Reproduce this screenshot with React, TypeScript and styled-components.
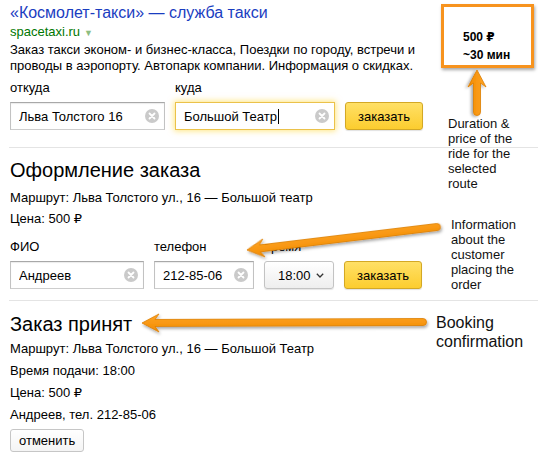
import React from "react";
import styled, { createGlobalStyle } from "styled-components";

const GlobalStyle = createGlobalStyle`
  html, body {
    margin: 0;
    padding: 0;
    background: #fff;
  }
  body {
    font-family: "Liberation Sans", Arial, "DejaVu Sans", sans-serif;
    font-size: 13px;
    color: #000;
  }
`;

const Page = styled.div`
  position: relative;
  width: 538px;
  height: 458px;
  overflow: hidden;
  background: #fff;
`;

const Section = styled.section<{ $top: number }>`
  padding: ${(p) => p.$top}px 0 0 10px;
`;

const Title = styled.a`
  display: block;
  font-size: 16px;
  line-height: 18px;
  color: #1a3dc1;
  text-decoration: none;
`;

const Url = styled.div`
  margin-top: 2px;
  font-size: 13px;
  line-height: 16px;
  color: #070;

  span {
    margin-left: 4px;
    font-size: 9px;
    color: #8dbd80;
  }
`;

const Desc = styled.p`
  margin: 1px 0 0;
  font-size: 13px;
  line-height: 16px;
`;

const Heading = styled.h2`
  margin: 0;
  font-size: 20px;
  line-height: 24px;
  font-weight: normal;
`;

const Line = styled.div<{ $gap: number }>`
  margin-top: ${(p) => p.$gap}px;
  line-height: 16px;
`;

const Divider = styled.hr<{ $gap: number }>`
  margin: ${(p) => p.$gap}px 0 0 9px;
  border: 0;
  border-top: 1px solid #e4e4e4;
  height: 0;
`;

const FieldRow = styled.div<{ $gap: number }>`
  display: flex;
  align-items: flex-end;
  gap: 10px;
  margin-top: ${(p) => p.$gap}px;
`;

const Field = styled.div`
  display: flex;
  flex-direction: column;
`;

const Label = styled.span`
  line-height: 16px;
  margin-bottom: 6px;
`;

const InputBox = styled.div<{ $width: number; $focused?: boolean }>`
  box-sizing: border-box;
  display: flex;
  align-items: center;
  width: ${(p) => p.$width}px;
  height: 28px;
  padding: 0 5px 0 8px;
  background: #fff;
  border: 1px solid;
  border-color: ${(p) =>
    p.$focused ? "#ebc24a" : "#a8a8a8 #c2c2c2 #cdcdcd"};
  box-shadow: ${(p) =>
    p.$focused
      ? "0 0 6px 1px rgba(255, 204, 0, 0.5)"
      : "inset 0 1px 1px rgba(0, 0, 0, 0.08)"};
  font-size: 13px;
`;

const Value = styled.span`
  flex: 1;
  white-space: nowrap;
  overflow: hidden;
`;

const Caret = styled.span`
  display: inline-block;
  width: 1px;
  height: 15px;
  margin-left: 1px;
  background: #000;
  vertical-align: -3px;
`;

const YellowButton = styled.button`
  box-sizing: border-box;
  width: 78px;
  height: 28px;
  padding: 0;
  border: 1px solid #d3a825;
  border-radius: 3px;
  background: linear-gradient(#ffe066, #fccd2f);
  box-shadow: 0 1px 1px rgba(0, 0, 0, 0.12);
  font-family: inherit;
  font-size: 13px;
  color: #000;
`;

const PlainButton = styled.button`
  box-sizing: border-box;
  margin-top: 6px;
  height: 23px;
  padding: 0 8px;
  border: 1px solid #c6c6c6;
  border-radius: 3px;
  background: linear-gradient(#fff, #f4f4f4);
  font-family: inherit;
  font-size: 13px;
  color: #000;
`;

const Select = styled.div`
  box-sizing: border-box;
  display: flex;
  align-items: center;
  gap: 5px;
  width: 70px;
  height: 28px;
  padding: 0 0 0 13px;
  border: 1px solid #c3c3c3;
  border-radius: 3px;
  background: linear-gradient(#fff, #eeeeee);
  box-shadow: 0 1px 1px rgba(0, 0, 0, 0.1);
  font-size: 13px;
`;

const PriceBox = styled.div`
  position: absolute;
  left: 441px;
  top: 4px;
  box-sizing: border-box;
  width: 93px;
  height: 64px;
  padding: 21px 0 0 19px;
  border: 3px solid #f7931e;
  box-shadow: 1px 2px 3px rgba(0, 0, 0, 0.35);
  background: #fff;
  font-size: 12px;
  font-weight: bold;
  line-height: 18px;
`;

const Note = styled.div<{ $left: number; $top: number; $size: number; $lh: number }>`
  position: absolute;
  left: ${(p) => p.$left}px;
  top: ${(p) => p.$top}px;
  font-size: ${(p) => p.$size}px;
  line-height: ${(p) => p.$lh}px;
  color: #111;
`;

const Overlay = styled.svg`
  position: absolute;
  left: 0;
  top: 0;
  pointer-events: none;
`;

const ClearIcon = () => (
  <svg width="14" height="14" viewBox="0 0 14 14">
    <circle cx="7" cy="7" r="7" fill="#cacaca" />
    <path d="M4.5 4.5l5 5M9.5 4.5l-5 5" stroke="#fff" strokeWidth="1.8" strokeLinecap="round" />
  </svg>
);

const Chevron = () => (
  <svg width="8" height="5" viewBox="0 0 8 5">
    <path d="M0.8 0.8L4 4L7.2 0.8" fill="none" stroke="#333" strokeWidth="1.3" />
  </svg>
);

type ArrowProps = { x1: number; y1: number; x2: number; y2: number };

// tail (x1, y1) -> tip (x2, y2)
const Arrow = ({ x1, y1, x2, y2 }: ArrowProps) => {
  const len = Math.hypot(x1 - x2, y1 - y2);
  const angle = (Math.atan2(y1 - y2, x1 - x2) * 180) / Math.PI;
  const d = `M0 0 L17 -9 L13 -3.5 L${len} -3.5 A3.5 3.5 0 0 1 ${len} 3.5 L13 3.5 L17 9 Z`;
  return (
    <g transform={`translate(${x2} ${y2}) rotate(${angle})`} filter="url(#shadow)">
      <path d={d} fill="url(#orange)" stroke="#dc7d05" strokeWidth="0.8" strokeLinejoin="round" />
    </g>
  );
};

const App: React.FC = () => {
  return (
    <Page>
      <GlobalStyle />

      <Section $top={4}>
        <Title href="#">«Космолет-такси» — служба такси</Title>
        <Url>
          spacetaxi.ru<span>▼</span>
        </Url>
        <Desc>
          Заказ такси эконом- и бизнес-класса, Поездки по городу, встречи и
          <br />
          проводы в аэропорту. Автопарк компании. Информация о скидках.
        </Desc>
        <FieldRow $gap={6}>
          <Field>
            <Label>откуда</Label>
            <InputBox $width={155}>
              <Value>Льва Толстого 16</Value>
              <ClearIcon />
            </InputBox>
          </Field>
          <Field>
            <Label>куда</Label>
            <InputBox $width={160} $focused>
              <Value>
                Большой Театр<Caret />
              </Value>
              <ClearIcon />
            </InputBox>
          </Field>
          <YellowButton>заказать</YellowButton>
        </FieldRow>
      </Section>

      <Divider $gap={17} />

      <Section $top={10}>
        <Heading>Оформление заказа</Heading>
        <Line $gap={8}>Маршрут: Льва Толстого ул., 16 — Большой театр</Line>
        <Line $gap={5}>Цена: 500 ₽</Line>
        <FieldRow $gap={12}>
          <Field>
            <Label>ФИО</Label>
            <InputBox $width={134}>
              <Value>Андреев</Value>
              <ClearIcon />
            </InputBox>
          </Field>
          <Field>
            <Label>телефон</Label>
            <InputBox $width={100}>
              <Value>212-85-06</Value>
              <ClearIcon />
            </InputBox>
          </Field>
          <Field>
            <Label>время</Label>
            <Select>
              18:00
              <Chevron />
            </Select>
          </Field>
          <YellowButton>заказать</YellowButton>
        </FieldRow>
      </Section>

      <Divider $gap={11} />

      <Section $top={11}>
        <Heading>Заказ принят</Heading>
        <Line $gap={5}>Маршрут: Льва Толстого ул., 16 — Большой Театр</Line>
        <Line $gap={6}>Время подачи: 18:00</Line>
        <Line $gap={6}>Цена: 500 ₽</Line>
        <Line $gap={6}>Андреев, тел. 212-85-06</Line>
        <PlainButton>отменить</PlainButton>
      </Section>

      <PriceBox>
        500 ₽
        <br />
        ~30 мин
      </PriceBox>

      <Overlay width="538" height="458" viewBox="0 0 538 458">
        <defs>
          <linearGradient id="orange" x1="0" y1="0" x2="0" y2="1">
            <stop offset="0" stopColor="#ffa526" />
            <stop offset="1" stopColor="#f28b00" />
          </linearGradient>
          <filter id="shadow" x="-20%" y="-50%" width="140%" height="200%">
            <feDropShadow dx="1" dy="2" stdDeviation="1.4" floodColor="#000" floodOpacity="0.35" />
          </filter>
        </defs>
        <Arrow x1={477} y1={112} x2={477} y2={70} />
        <Arrow x1={437} y1={227} x2={247} y2={250} />
        <Arrow x1={423} y1={322} x2={142} y2={323} />
      </Overlay>

      <Note $left={448} $top={116} $size={13} $lh={15}>
        Duration &amp;
        <br />
        price of the
        <br />
        ride for the
        <br />
        selected
        <br />
        route
      </Note>
      <Note $left={451} $top={217} $size={13} $lh={15}>
        Information
        <br />
        about the
        <br />
        customer
        <br />
        placing the
        <br />
        order
      </Note>
      <Note $left={436} $top={313} $size={16} $lh={19}>
        Booking
        <br />
        confirmation
      </Note>
    </Page>
  );
};

export default App;
